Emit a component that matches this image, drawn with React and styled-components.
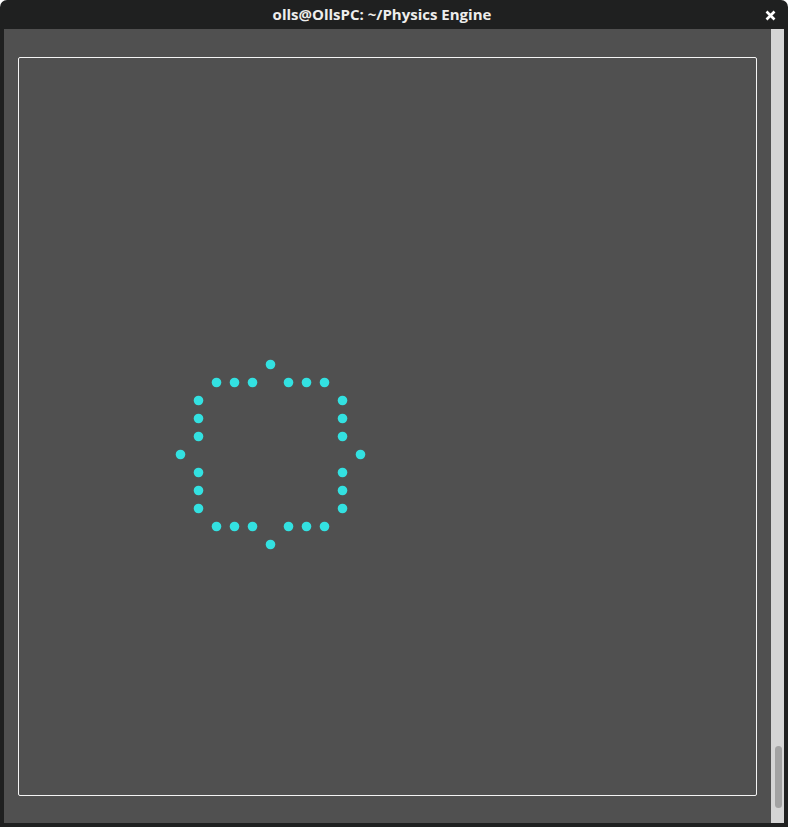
import React from "react";
import styled, { createGlobalStyle } from "styled-components";

const Global = createGlobalStyle`
  html, body { margin: 0; padding: 0; background: #ffffff; }
  #root { width: 788px; height: 827px; }
`;

const Window = styled.div`
  width: 788px;
  height: 827px;
  background: #1f2020;
  border-radius: 7px 7px 0 0;
  display: flex;
  flex-direction: column;
  overflow: hidden;
`;

const TitleBar = styled.div`
  height: 29px;
  flex: none;
  display: flex;
  align-items: center;
  position: relative;
`;

const Title = styled.div`
  flex: 1;
  text-align: center;
  padding-right: 24px;
  color: #eeeeec;
  font-family: "Open Sans", "DejaVu Sans", sans-serif;
  font-weight: 700;
  font-size: 15px;
  letter-spacing: 0;
  line-height: 29px;
`;

const CloseButton = styled.div`
  position: absolute;
  right: 12px;
  top: 9px;
  width: 12px;
  height: 12px;
  display: flex;
  align-items: center;
  justify-content: center;
`;

const Body = styled.div`
  flex: 1;
  display: flex;
  padding: 0 4px 4px 4px;
  min-height: 0;
`;

const Canvas = styled.div`
  flex: 1;
  background: #505050;
  padding: 28px 14px 27px 14px;
  display: flex;
  align-items: flex-start;
`;

const Frame = styled.div`
  width: 737px;
  height: 737px;
  border: 1px solid #f4f4f4;
  border-radius: 2px;
`;

const Scrollbar = styled.div`
  width: 13px;
  flex: none;
  background: #d5d5d5;
  display: flex;
  flex-direction: column;
  justify-content: flex-end;
  align-items: center;
  padding-bottom: 15px;
  padding-left: 1px;
  box-sizing: border-box;
`;

const Thumb = styled.div`
  width: 7px;
  height: 62px;
  border-radius: 4px;
  background: #a3a3a3;
`;

const cx = 251.5;
const cy = 396.5;
const dots = [];
dots.push([0, -90], [0, 90], [-90, 0], [90, 0]);
[-54, -36, -18, 18, 36, 54].forEach((o) => {
  dots.push([o, -72], [o, 72], [-72, o], [72, o]);
});

export default function App() {
  return (
    <>
      <Global />
      <Window>
        <TitleBar>
          <Title>olls@OllsPC: ~/Physics Engine</Title>
          <CloseButton>
            <svg width="11" height="11" viewBox="0 0 11 11">
              <path d="M1.5 1.5 L9.5 9.5 M9.5 1.5 L1.5 9.5" stroke="#ffffff" strokeWidth="2.6" strokeLinecap="butt" />
            </svg>
          </CloseButton>
        </TitleBar>
        <Body>
          <Canvas>
            <Frame>
              <svg width="737" height="737" style={{ display: "block" }}>
                {dots.map(([dx, dy], i) => (
                  <circle key={i} cx={cx + dx} cy={cy + dy} r="4.8" fill="#33e1e1" />
                ))}
              </svg>
            </Frame>
          </Canvas>
          <Scrollbar>
            <Thumb />
          </Scrollbar>
        </Body>
      </Window>
    </>
  );
}
